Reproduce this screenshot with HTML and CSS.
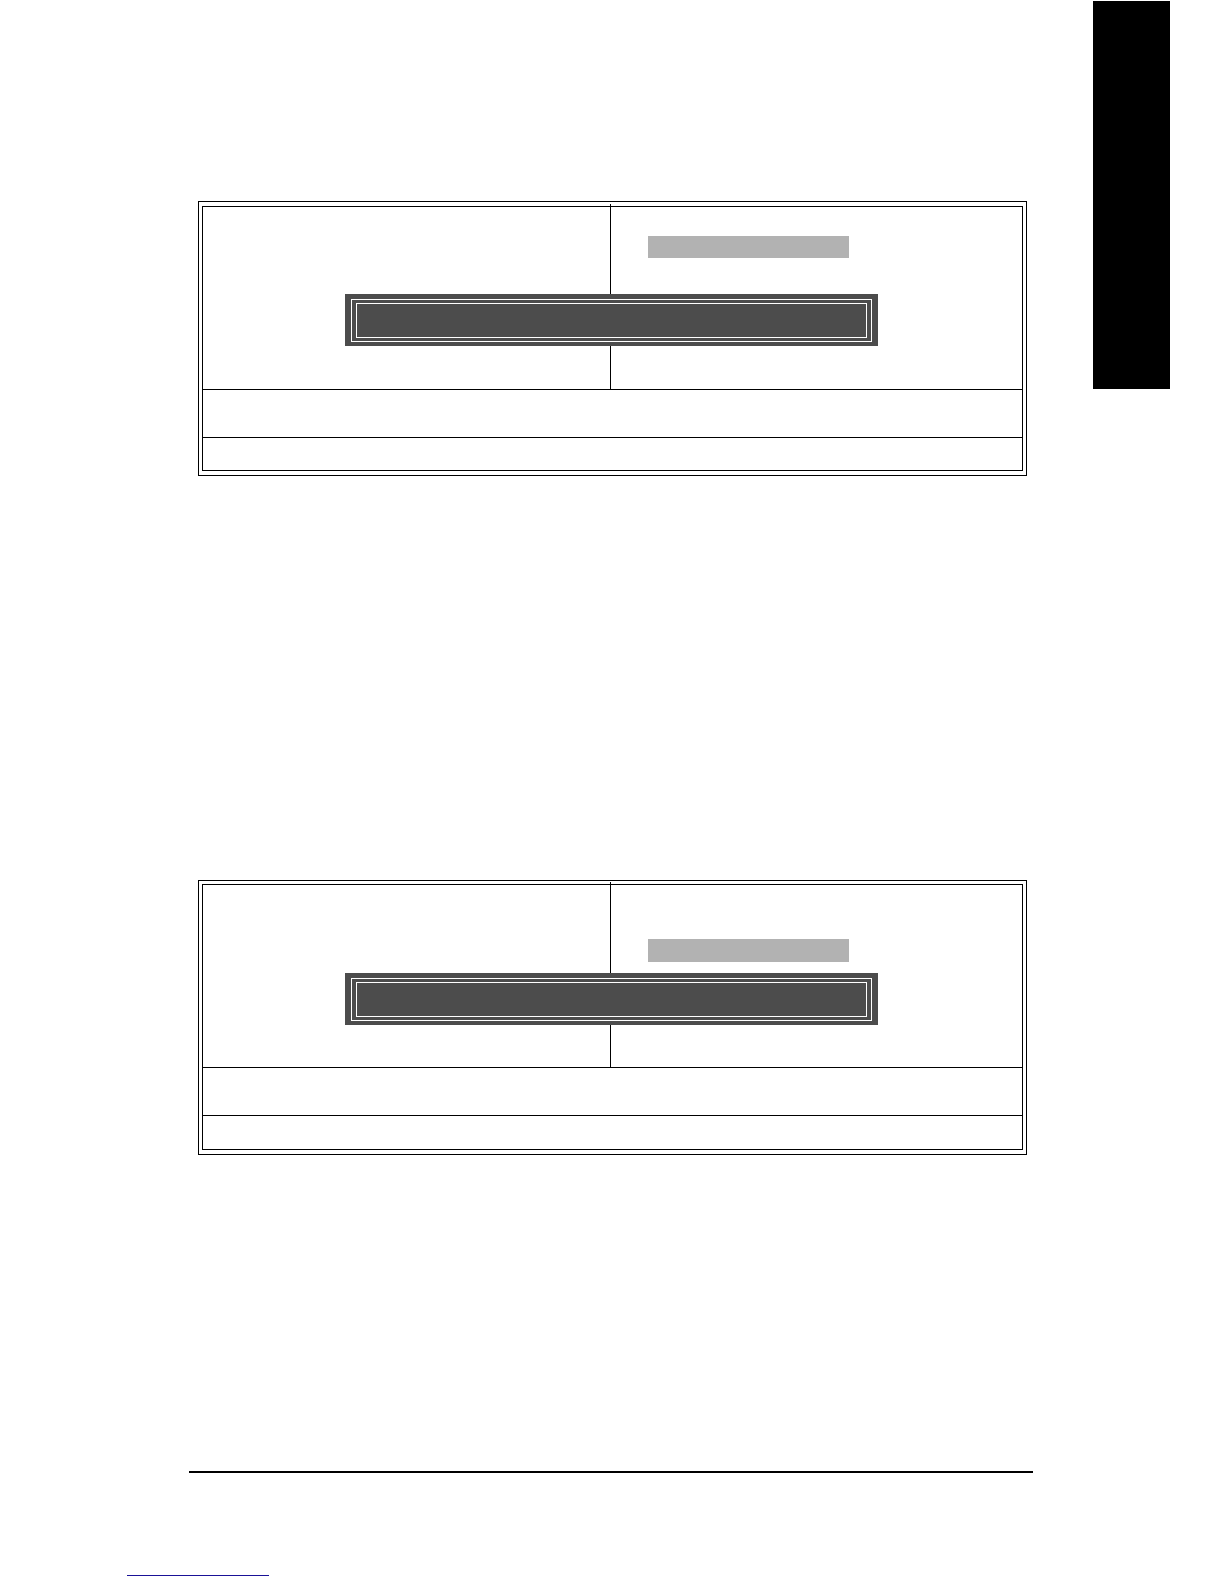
FILE: index.html
```html
<!DOCTYPE html>
<html lang="en">
<head>
<meta charset="utf-8">
<meta name="viewport" content="width=device-width, initial-scale=1">
<title>Setup screens</title>
<link rel="stylesheet" href="styles.css">
</head>
<body>
<div class="sheet">
  <main class="content">
    <section class="screen">
      <div class="screen-inner">
        <div class="menu">
          <div class="menu-left"></div>
          <div class="menu-right"><div class="highlight"></div></div>
          <div class="dialog"><div class="dialog-outer"><div class="dialog-inner"></div></div></div>
        </div>
        <div class="keys"></div>
        <div class="hint"></div>
      </div>
    </section>
    <section class="screen screen-second">
      <div class="screen-inner">
        <div class="menu">
          <div class="menu-left"></div>
          <div class="menu-right"><div class="highlight"></div></div>
          <div class="dialog"><div class="dialog-outer"><div class="dialog-inner"></div></div></div>
        </div>
        <div class="keys"></div>
        <div class="hint"></div>
      </div>
    </section>
    <hr class="rule">
  </main>
  <aside class="side-tab"></aside>
</div>
<footer class="footer"><div class="underline"></div></footer>
</body>
</html>
```
FILE: styles.css
```css
* {
  box-sizing: border-box;
}

body {
  margin: 0;
  background: #fff;
  font-family: "Liberation Sans", sans-serif;
}

.sheet {
  display: grid;
  grid-template-columns: minmax(0, 1fr) 77px;
  column-gap: 60px;
  align-items: start;
  padding: 1px 54px 0 189px;
}

.side-tab {
  height: 388px;
  background: #000;
}

.content {
  padding-top: 200px;
}

.screen {
  margin: 0 6px 0 9px;
  padding: 4px 3px;
  border: 1px solid #000;
}

.screen-inner {
  border: 1px solid #000;
}

.menu {
  display: grid;
  grid-template-columns: 407fr 412fr;
  grid-template-rows: 182px;
}

.menu-left {
  grid-area: 1 / 1;
}

/* The divider runs slightly past the inner frame. */
.menu-right {
  grid-area: 1 / 2;
  margin-top: -3px;
  padding: 32px 0 0 37px;
  border-left: 1px solid #000;
}

.highlight {
  width: 201px;
  height: 22px;
  background: #b2b2b2;
}

.dialog {
  grid-area: 1 / 1 / 2 / 3;
  align-self: start;
  margin: 87px 144px 0 142px;
  padding: 5px 6px 4px;
  background: #4c4c4c;
}

.dialog-outer {
  padding: 3px 4px;
  border: 1px solid #fff;
}

.dialog-inner {
  height: 35px;
  border: 1px solid #fff;
}

.keys {
  height: 49px;
  border: solid #000;
  border-width: 1px 0;
}

.hint {
  height: 32px;
}

.screen-second {
  margin-top: 404px;
  padding-top: 3px;
}

.screen-second .menu-right {
  padding-top: 57px;
}

.screen-second .highlight {
  height: 23px;
}

.screen-second .dialog {
  margin-top: 88px;
}

.screen-second .hint {
  height: 33px;
}

.rule {
  height: 2px;
  margin: 316px 0 0;
  border: 0;
  background: #000;
}

.footer {
  padding: 102px 0 8px 127px;
}

.underline {
  width: 142px;
  height: 1px;
  background: #1a1297;
}
```
